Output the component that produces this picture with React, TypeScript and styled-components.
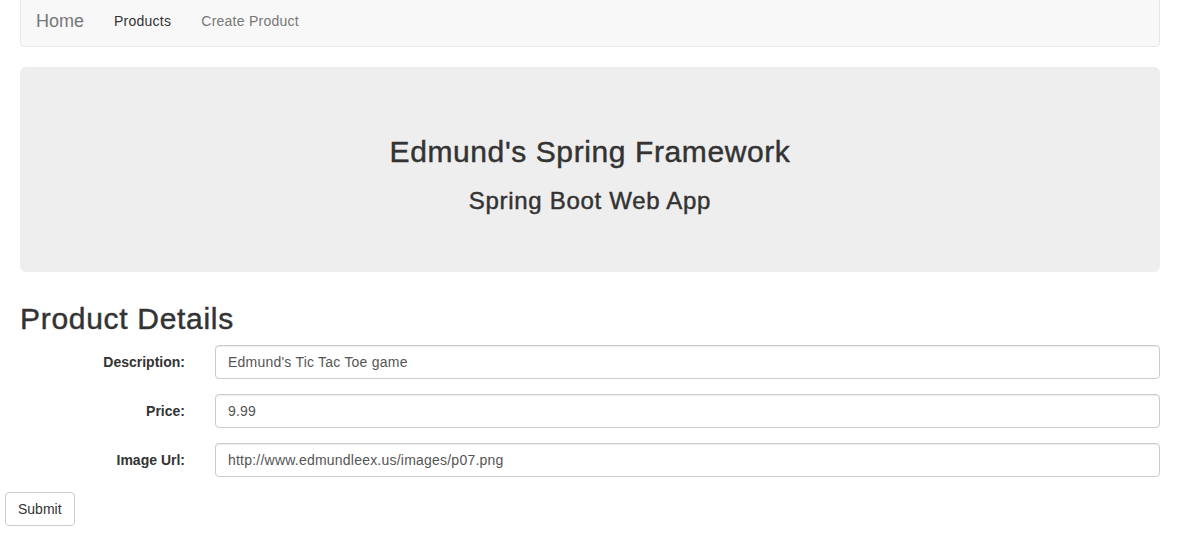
import React from "react";
import styled, { createGlobalStyle } from "styled-components";

const GlobalStyle = createGlobalStyle`
  * { box-sizing: border-box; }
  html, body { margin: 0; padding: 0; background: #fff; }
  body {
    font-family: "Liberation Sans", Arial, Helvetica, sans-serif;
    font-size: 14px;
    line-height: 1.42857143;
    color: #333;
  }
`;

const Page = styled.div`
  width: 1182px;
  padding: 0 22px 0 20px;
`;

const Navbar = styled.nav`
  margin-top: -5px;
  height: 52px;
  background: #f8f8f8;
  border: 1px solid #e7e7e7;
  border-radius: 4px;
  display: flex;
  align-items: stretch;
  padding-left: 15px;
`;

const Brand = styled.a`
  font-size: 18px;
  line-height: 20px;
  padding: 15px 15px 15px 0;
  color: #777;
  text-decoration: none;
`;

const NavList = styled.ul`
  list-style: none;
  margin: 0;
  padding: 0;
  display: flex;
`;

const NavLink = styled.a<{ $active?: boolean }>`
  display: block;
  padding: 15px;
  line-height: 20px;
  font-size: 14px;
  letter-spacing: 0.25px;
  color: ${(p) => (p.$active ? "#333" : "#777")};
  text-decoration: none;
`;

const Jumbotron = styled.header`
  margin-top: 20px;
  margin-bottom: 30px;
  padding: 48px 60px;
  background: #eee;
  border-radius: 6px;
  text-align: center;
`;

const Heading = styled.h2<{ $size: number; $spacing: number }>`
  font-size: ${(p) => p.$size}px;
  line-height: 1.1;
  font-weight: 500;
  letter-spacing: ${(p) => p.$spacing}px;
  -webkit-text-stroke: 0.45px #333;
  color: #333;
`;

const Title = styled(Heading)`
  margin: 20px 0 0;
`;

const Subtitle = styled(Heading)`
  margin: 20px 0 10px;
`;

const SectionTitle = styled(Heading)`
  margin: 0 0 10px;
`;

const Form = styled.form`
  margin: 0 -15px;
`;

const FormGroup = styled.div`
  display: grid;
  grid-template-columns: 195px 1fr;
  margin-bottom: 15px;
`;

const Label = styled.label`
  padding: 7px 15px 0;
  text-align: right;
  font-weight: bold;
  font-size: 14px;
  line-height: 20px;
  color: #333;
`;

const Field = styled.div`
  padding: 0 15px;
`;

const Input = styled.input`
  display: block;
  width: 100%;
  height: 34px;
  padding: 6px 12px;
  font-family: inherit;
  font-size: 14px;
  line-height: 20px;
  letter-spacing: 0.22px;
  color: #555;
  background: #fff;
  border: 1px solid #ccc;
  border-radius: 4px;
  box-shadow: inset 0 1px 1px rgba(0, 0, 0, 0.075);
  outline: none;
`;

const Button = styled.button`
  display: inline-block;
  height: 34px;
  padding: 6px 12px;
  font-family: inherit;
  font-size: 14px;
  line-height: 20px;
  color: #333;
  background: #fff;
  border: 1px solid #ccc;
  border-radius: 4px;
  cursor: pointer;
`;

const fields = [
  { label: "Description:", value: "Edmund's Tic Tac Toe game" },
  { label: "Price:", value: "9.99" },
  { label: "Image Url:", value: "http://www.edmundleex.us/images/p07.png" },
];

export default function App() {
  return (
    <>
      <GlobalStyle />
      <Page>
        <Navbar>
          <Brand href="#">Home</Brand>
          <NavList>
            <li>
              <NavLink href="#" $active>
                Products
              </NavLink>
            </li>
            <li>
              <NavLink href="#">Create Product</NavLink>
            </li>
          </NavList>
        </Navbar>
        <Jumbotron>
          <Title $size={30} $spacing={0.6}>
            Edmund's Spring Framework
          </Title>
          <Subtitle as="h3" $size={24} $spacing={0.7}>
            Spring Boot Web App
          </Subtitle>
        </Jumbotron>
        <SectionTitle $size={30} $spacing={0.7}>
          Product Details
        </SectionTitle>
        <Form onSubmit={(e) => e.preventDefault()}>
          {fields.map((f) => (
            <FormGroup key={f.label}>
              <Label>{f.label}</Label>
              <Field>
                <Input type="text" defaultValue={f.value} />
              </Field>
            </FormGroup>
          ))}
          <Button type="submit">Submit</Button>
        </Form>
      </Page>
    </>
  );
}
